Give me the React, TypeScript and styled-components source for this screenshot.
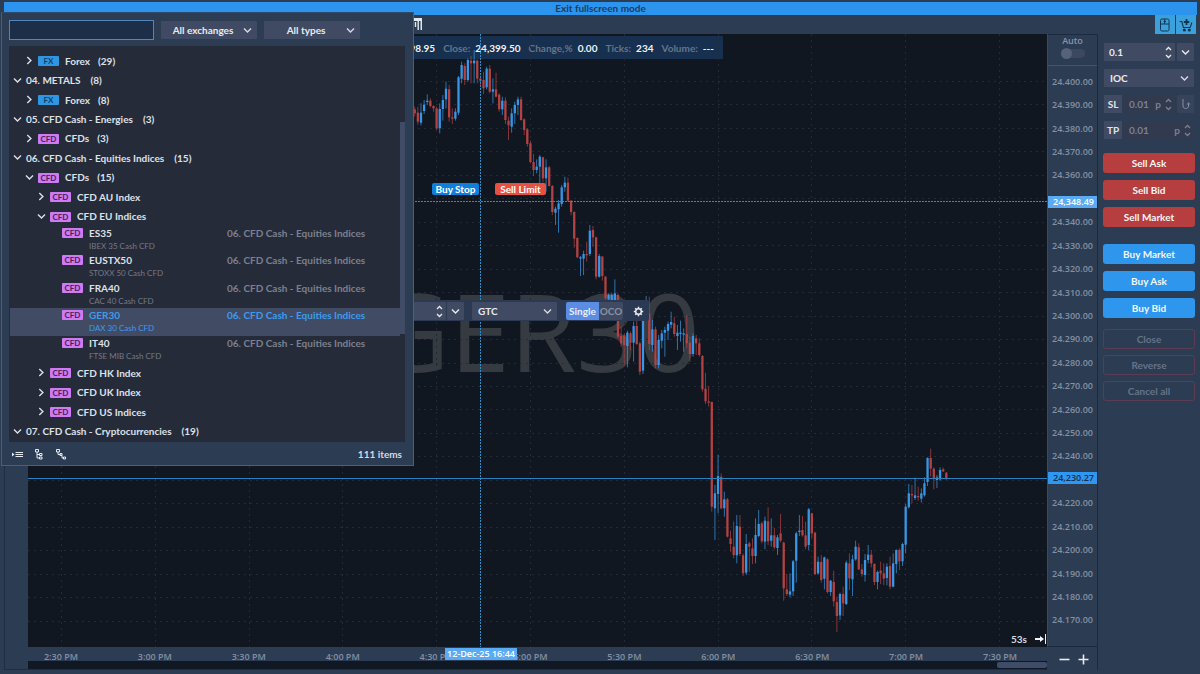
import React from "react";
import styled, { createGlobalStyle } from "styled-components";

const GlobalStyle = createGlobalStyle`
  * { box-sizing: border-box; }
  body { margin: 0; background: #2b3c53; }
  button, input, select { font: inherit; color: inherit; margin: 0; border: 0; border-radius: 0; padding: 0; }
  input:focus, select:focus { outline: none; }
`;

const Page = styled.div`
  position: relative;
  min-height: 100vh;
  display: flex;
  flex-direction: column;
  padding: 2px 0 4px 4px;
  background: #2b3c53;
  color: #d6dae2;
  font-family: Lato, "Open Sans", sans-serif;
  font-size: 10px;
  font-weight: 700;
  line-height: 12px;
  overflow: hidden;
`;

const Banner = styled.button`
  height: 13px;
  margin-right: 3px;
  background: #2c94ec;
  color: #1c3c5f;
  line-height: 13px;
  text-align: center;
`;

const ChartToolbar = styled.div`
  height: 19px;
  display: flex;
  align-items: stretch;
  justify-content: flex-end;
  gap: 1px;
  padding-right: 4px;
`;

const StyleButton = styled.button`
  width: 12px;
  margin-right: auto;
  margin-left: 408px;
  background: none;
`;

const ModeButton = styled.button`
  width: 20px;
  display: grid;
  place-items: center;
  background: #3ba1dc;
  color: #14344f;
`;

const Workspace = styled.main`
  flex: 1;
  display: grid;
  grid-template-columns: 24px minmax(0, 1fr) 51px 102px;
`;

const ToolStrip = styled.aside`
  border-left: 1px solid #1c2d45;
  border-bottom: 1px solid #1c2d45;
`;

const ChartColumn = styled.section`
  display: grid;
  grid-template-rows: minmax(0, 1fr) 14px 9px;
`;

const Plot = styled.div`
  position: relative;
  display: flex;
  align-items: center;
  justify-content: center;
  background: #101720;
  overflow: hidden;
`;

const Watermark = styled.div`
  padding: 0 4px 20px 0;
  font-family: "Open Sans", sans-serif;
  font-size: 108px;
  font-weight: 500;
  line-height: 120px;
  color: #363b42;
`;

const InfoBar = styled.dl`
  position: absolute;
  top: 2px;
  left: 0;
  width: 695px;
  height: 23px;
  margin: 0;
  padding-right: 9px;
  display: flex;
  align-items: center;
  justify-content: flex-end;
  gap: 8px;
  background: #18304f;
`;

const InfoItem = styled.div`
  display: flex;
  gap: 5px;
  dt { color: #64748a; }
  dd { margin: 0; color: #f0f3f7; }
`;

const ChartSvg = styled.svg`
  position: absolute;
  inset: 0;
  width: 100%;
  height: 100%;
`;

const OrderTag = styled.button<{ $left: number; $color: string; $width: number }>`
  position: absolute;
  top: 149px;
  left: ${(p) => p.$left}px;
  width: ${(p) => p.$width}px;
  height: 12px;
  border-radius: 2px;
  background: ${(p) => p.$color};
  color: #fff;
  line-height: 12px;
`;

const OrderToolbar = styled.div`
  position: absolute;
  top: 266px;
  left: 300px;
  width: 321px;
  height: 21px;
  padding: 2px 5px 1px 2px;
  display: flex;
  align-items: stretch;
  gap: 8px;
  border-radius: 2px;
  background: #2b3a52;
`;

const QtyGroup = styled.div`
  flex: 1;
  display: flex;
  gap: 1px;
`;

const Field = styled.div<{ $dim?: boolean }>`
  position: relative;
  flex: 1;
  min-width: 0;
  display: flex;
  align-items: center;
  justify-content: flex-end;
  gap: 4px;
  padding: 0 3px 0 5px;
  border-radius: 1px;
  background: ${(p) => (p.$dim ? "#313a4f" : "#404a63")};
  color: ${(p) => (p.$dim ? "#7a8292" : "#e8ebf0")};
`;

const FieldInput = styled.input`
  flex: 1;
  width: 0;
  min-width: 0;
  background: none;
  line-height: 14px;
`;

const SquareButton = styled.button<{ $dim?: boolean }>`
  width: 17px;
  display: grid;
  place-items: center;
  border-radius: 1px;
  background: ${(p) => (p.$dim ? "#37435a" : "#404a63")};
  color: ${(p) => (p.$dim ? "#8791a3" : "#e8ebf0")};
`;

const SelectBox = styled.div<{ $width?: number }>`
  position: relative;
  display: grid;
  width: ${(p) => (p.$width ? `${p.$width}px` : "auto")};
  svg {
    position: absolute;
    right: 5px;
    top: 50%;
    margin-top: -4px;
    pointer-events: none;
  }
`;

const Select = styled.select<{ $centered?: boolean }>`
  appearance: none;
  width: 100%;
  min-width: 0;
  padding: ${(p) => (p.$centered ? "0 12px 0 0" : "0 12px 0 6px")};
  text-align: ${(p) => (p.$centered ? "center" : "left")};
  text-align-last: ${(p) => (p.$centered ? "center" : "left")};
  border-radius: 1px;
  background: #404a63;
  color: #e8ebf0;
`;

const Segmented = styled.div`
  display: flex;
  margin: 0 2px 0 1px;
`;

const Segment = styled.button<{ $on?: boolean }>`
  width: ${(p) => (p.$on ? 33 : 24)}px;
  border-radius: ${(p) => (p.$on ? "2px 0 0 2px" : "0 2px 2px 0")};
  background: ${(p) => (p.$on ? "#5b8de4" : "#404a63")};
  color: ${(p) => (p.$on ? "#e6eefc" : "#8791a3")};
`;

const PlainButton = styled.button`
  display: grid;
  place-items: center;
  background: none;
  color: #e8ebf0;
`;

const Countdown = styled.div`
  position: absolute;
  right: 1px;
  bottom: 2px;
  display: flex;
  align-items: center;
  gap: 8px;
`;

const TimeAxis = styled.div`
  position: relative;
  margin-left: -14px;
  display: grid;
  grid-template-columns: repeat(11, minmax(0, 1fr));
  color: #8390a3;
  font-family: "Open Sans", sans-serif;
  font-size: 9px;
  font-weight: 600;
  line-height: 20px;
  text-align: center;
`;

const TimeTag = styled.div`
  position: absolute;
  top: 1px;
  left: 431px;
  width: 72px;
  height: 12px;
  background: #5aabf4;
  color: #fff;
  line-height: 12px;
`;

const ScrollTrack = styled.div`
  display: flex;
  justify-content: flex-end;
  padding: 1px 0;
  background: #101823;
  border-bottom: 1px solid #1c2d45;
`;

const ScrollThumb = styled.div`
  width: 50px;
  border-radius: 2px;
  background: #3e4c68;
`;

const PriceColumn = styled.section`
  display: grid;
  grid-template-rows: minmax(0, 1fr) 23px;
  border-right: 1px solid #1b2a40;
`;

const PriceAxis = styled.div`
  position: relative;
  display: flex;
  flex-direction: column;
  padding-bottom: 14px;
  border-left: 1px solid #3a4a60;
  border-bottom: 1px solid #1b2a40;
  font-family: "Open Sans", sans-serif;
  font-size: 9px;
  font-weight: 600;
`;

const AutoScale = styled.label`
  height: 32px;
  margin-bottom: 4px;
  display: flex;
  flex-direction: column;
  align-items: center;
  gap: 2px;
  border-top: 1px solid #1b2a40;
  border-bottom: 1px solid #43536a;
  color: #8a96a8;
`;

const Toggle = styled.input`
  appearance: none;
  width: 24px;
  height: 9px;
  margin: 0;
  border-radius: 5px;
  background: #3c4860;
  &::before {
    content: "";
    display: block;
    width: 11px;
    height: 11px;
    margin-top: -1px;
    border-radius: 50%;
    background: #56617a;
  }
`;

const PriceLabel = styled.div`
  flex: 1;
  display: flex;
  align-items: center;
  padding-left: 4px;
  color: #8390a3;
`;

const PriceTag = styled.div<{ $top: number; $last?: boolean }>`
  position: absolute;
  top: ${(p) => p.$top}px;
  left: 0;
  right: 0;
  height: 12px;
  padding-left: 5px;
  background: ${(p) => (p.$last ? "#3097f0" : "#5aabf4")};
  color: ${(p) => (p.$last ? "#14304e" : "#fff")};
  line-height: 12px;
`;

const ZoomControls = styled.div`
  display: flex;
  align-items: center;
  gap: 8px;
  padding: 2px 0 0 12px;
`;

const OrderPanel = styled.aside`
  padding: 9px 5px 0;
  display: flex;
  flex-direction: column;
`;

const OrderFields = styled.div`
  display: flex;
  flex-direction: column;
  gap: 8px;
  padding: 0 1px;
`;

const FieldRow = styled.div`
  height: 18px;
  display: flex;
  align-items: stretch;
  gap: 2px;
  & > ${SelectBox} { flex: 1; }
`;

const FieldLabel = styled.label`
  width: 18px;
  background: #404a63;
  color: #dfe3ea;
  line-height: 18px;
  text-align: center;
`;

const ButtonStack = styled.div<{ $top: number; $gap: number }>`
  margin-top: ${(p) => p.$top}px;
  display: flex;
  flex-direction: column;
  gap: ${(p) => p.$gap}px;
`;

const TradeButton = styled.button<{ $kind: "sell" | "buy" | "ghost" }>`
  height: 20px;
  border-radius: 3px;
  background: ${(p) => ({ sell: "#b63e3e", buy: "#2e96ec", ghost: "transparent" })[p.$kind]};
  border: ${(p) => (p.$kind === "ghost" ? "1px solid #5b3c54" : "0")};
  color: ${(p) => (p.$kind === "ghost" ? "#66748a" : "#f4f6fa")};
`;

const SymbolPopup = styled.section`
  position: absolute;
  top: 12px;
  left: 1px;
  width: 413px;
  height: 454px;
  padding: 7px 8px 0 7px;
  display: flex;
  flex-direction: column;
  background: #2b3c53;
  border: 1px solid #4a5f7c;
  border-top-color: #2f4a6b;
`;

const FilterRow = styled.div`
  height: 20px;
  margin-bottom: 6px;
  display: flex;
  align-items: center;
  gap: 7px;
  & > ${SelectBox} { height: 18px; }
`;

const SearchInput = styled.input`
  width: 145px;
  height: 20px;
  padding: 0 4px;
  background: #1d2e49;
  border: 1px solid #5285c0;
`;

const TreeFrame = styled.div`
  height: 396px;
  display: flex;
  background: #262b3a;
`;

const Tree = styled.ul`
  flex: 1;
  min-width: 0;
  margin: 0;
  padding: 5px 0 1px 1px;
  display: flex;
  flex-direction: column;
  list-style: none;
`;

const TreeThumb = styled.div`
  width: 5px;
  height: 212px;
  margin-top: 76px;
  background: #404b65;
`;

const TreeItem = styled.li<{ $leaf?: boolean }>`
  flex: 1 0 ${(p) => (p.$leaf ? 27 : 19)}px;
  display: flex;
`;

const TreeRow = styled.button<{ $level: number; $leaf?: boolean; $selected?: boolean }>`
  flex: 1;
  min-width: 0;
  display: flex;
  align-items: ${(p) => (p.$leaf ? "flex-start" : "center")};
  padding-top: ${(p) => (p.$leaf ? 1 : 0)}px;
  padding-left: ${(p) => 2 + p.$level * 12 + (p.$leaf ? 14 : 0)}px;
  background: ${(p) => (p.$selected ? "#414b64" : "none")};
  color: ${(p) => (p.$selected ? "#3d9cec" : "#dde1e8")};
  text-align: left;
  white-space: nowrap;
`;

const ChevronSlot = styled.span`
  width: 11px;
  margin-right: 3px;
  display: grid;
  place-items: center;
`;

const Badge = styled.span<{ $fx?: boolean }>`
  width: 21px;
  height: 10px;
  margin-top: 1px;
  margin-right: 6px;
  border-radius: 1px;
  background: ${(p) => (p.$fx ? "#2f97e2" : "#cf7af2")};
  color: ${(p) => (p.$fx ? "#12406a" : "#45205a")};
  font-size: 8px;
  line-height: 10px;
  text-align: center;
`;

const Count = styled.span<{ $root: boolean }>`
  margin-left: ${(p) => (p.$root ? 10 : 8)}px;
`;

const LeafName = styled.span`
  width: 138px;
  display: flex;
  flex-direction: column;
  gap: 1px;
`;

const Description = styled.span<{ $selected?: boolean }>`
  color: ${(p) => (p.$selected ? "#3d9cec" : "#747a87")};
  font-size: 8px;
  font-weight: 400;
`;

const Exchange = styled.span<{ $selected?: boolean }>`
  color: ${(p) => (p.$selected ? "#3d9cec" : "#7b818e")};
`;

const PopupFooter = styled.footer`
  flex: 1;
  display: flex;
  align-items: center;
  gap: 10px;
  padding: 0 3px 0 2px;
  & > span { margin-left: auto; }
`;

const Chevron = ({ dir = "down" }: { dir?: "down" | "right" }) => (
  <svg width="9" height="9" viewBox="0 0 9 9" fill="none" stroke="currentColor" strokeWidth="1.4" aria-hidden="true">
    <path d={dir === "down" ? "M1 2.5 4.5 6 8 2.5" : "M2.3 1 5.9 4.5 2.3 8"} />
  </svg>
);

const Stepper = () => (
  <svg width="7" height="13" viewBox="0 0 7 13" fill="none" stroke="currentColor" strokeWidth="1.3" aria-hidden="true">
    <path d="M1 4 3.5 1.5 6 4M1 9 3.5 11.5 6 9" />
  </svg>
);

type Row = { level: number; label: string; count?: number; badge?: "FX" | "CFD"; open?: boolean; desc?: string; selected?: boolean };

const ROWS: Row[] = [
  { level: 1, label: "Forex", count: 29, badge: "FX" },
  { level: 0, label: "04. METALS", count: 8, open: true },
  { level: 1, label: "Forex", count: 8, badge: "FX" },
  { level: 0, label: "05. CFD Cash - Energies", count: 3, open: true },
  { level: 1, label: "CFDs", count: 3, badge: "CFD" },
  { level: 0, label: "06. CFD Cash - Equities Indices", count: 15, open: true },
  { level: 1, label: "CFDs", count: 15, badge: "CFD", open: true },
  { level: 2, label: "CFD AU Index", badge: "CFD" },
  { level: 2, label: "CFD EU Indices", badge: "CFD", open: true },
  { level: 3, label: "ES35", badge: "CFD", desc: "IBEX 35 Cash CFD" },
  { level: 3, label: "EUSTX50", badge: "CFD", desc: "STOXX 50 Cash CFD" },
  { level: 3, label: "FRA40", badge: "CFD", desc: "CAC 40 Cash CFD" },
  { level: 3, label: "GER30", badge: "CFD", desc: "DAX 30 Cash CFD", selected: true },
  { level: 3, label: "IT40", badge: "CFD", desc: "FTSE MIB Cash CFD" },
  { level: 2, label: "CFD HK Index", badge: "CFD" },
  { level: 2, label: "CFD UK Index", badge: "CFD" },
  { level: 2, label: "CFD US Indices", badge: "CFD" },
  { level: 0, label: "07. CFD Cash - Cryptocurrencies", count: 19, open: true },
];

const TIMES = ["2:30 PM", "3:00 PM", "3:30 PM", "4:00 PM", "4:30 PM", "5:00 PM", "5:30 PM", "6:00 PM", "6:30 PM", "7:00 PM", "7:30 PM"];
const LEVELS = Array.from({ length: 24 }, (_, i) => 400 - i * 10);
/* Levels whose label gives way to a price tag. */
const TAGGED = [350, 230];

/* One-minute bars: high, body top, body bottom, low, in thirds of a pixel below each run's base; u = up, d = down. */
const RUNS: { from: number; base: number; bars: string }[] = [
  {
    from: -97,
    base: -102,
    bars:
      "320 328 340 350 d|320 338 365 374 d|310 338 368 376 u|300 314 333 342 u|283 302 306 315 u|295 302 318 322 d|316 318 325 335 d|322 325 385 390 d|310 327 385 400 u|285 300 327 362 u|245 266 298 325 u|255 268 352 365 d|325 352 356 372 d|325 335 356 362 u|228 232 338 345 u|185 195 236 250 u|190 198 240 255 d|175 180 240 245 u|168 182 190 250 d|150 182 190 250 u|178 182 236 250 d|232 236 242 260 d|215 240 265 282 d|200 206 262 268 u|195 206 275 280 d|235 268 275 310 u|218 268 290 292 d|280 284 328 335 d|290 302 328 345 u|292 302 360 372 d|350 362 376 420 d|325 340 380 398 u|305 315 340 372 u|290 298 315 345 u|290 298 360 362 d|355 358 390 405 d|385 388 432 440 d|422 430 486 490 d|462 486 510 528 d|478 500 510 520 u|465 470 500 550 u|470 472 535 548 d|478 502 535 575 u|498 502 558 560 d|555 558 636 645 d|620 626 638 675 u|600 610 628 698 u|555 562 612 620 u|530 548 562 575 u|533 548 602 605 d",
  },
  {
    from: -47,
    base: 438,
    bars:
      "60 62 96 106 d|94 96 176 203 d|172 174 232 234 d|228 232 236 288 u|212 222 236 285 u|185 222 226 245 d|135 152 222 228 u|138 150 172 200 d|170 172 290 298 d|222 228 290 293 u|228 230 288 302 d|288 290 355 360 d|340 345 358 370 u|340 345 360 370 u|298 340 362 370 u|340 345 470 475 d|440 468 490 500 d|460 466 495 557 d|452 458 498 562 u|455 460 488 510 d|425 438 488 545 u|420 438 492 495 d|485 490 575 585 d|360 420 572 582 u|348 370 400 410 u|350 400 492 510 d|420 448 495 515 u|440 448 555 565 d|465 480 555 565 u|450 460 482 505 u|440 450 458 530 u|425 432 452 480 u|395 426 434 445 u|410 430 462 470 d|435 458 468 510 u|422 458 462 485 u|445 460 464 515 u|405 462 490 505 d|470 488 522 545 d|460 468 522 530 u|465 475 490 525 d|475 490 525 530 d",
  },
  {
    from: -5,
    base: 798,
    bars:
      "165 168 268 275 d|218 266 304 312 d|258 304 308 320 d|305 306 620 635 d|555 580 625 720 u|465 528 582 640 u|520 530 625 628 d|575 598 625 650 u|594 598 710 712 d|692 715 732 755 d|665 740 765 775 d|645 678 766 790 u|645 680 762 768 d|760 766 820 828 d|702 732 818 825 u|725 730 740 815 d|715 745 768 792 d|655 705 768 790 u|630 672 708 712 u|665 670 724 730 d|650 662 725 748 u|622 664 724 735 d|655 706 722 740 u|684 706 742 748 d|705 712 744 765 u|642 700 722 728 d",
  },
  {
    from: 21,
    base: 1188,
    bars:
      "335 338 475 512 d|432 478 492 498 d|430 484 494 502 u|390 394 484 498 u|305 310 392 458 u|255 302 306 318 u|258 300 316 320 d|275 316 350 358 d|234 238 345 360 u|248 250 310 325 d|305 308 432 435 d|380 395 430 435 u|375 396 450 458 d|380 382 446 478 u|385 388 486 490 d|450 452 486 498 u|422 456 514 530 d|500 516 558 606 d|488 492 556 570 u|470 492 520 558 d|392 398 522 525 u|370 400 445 480 d|375 388 448 498 u|332 350 388 392 u|340 352 418 420 d|402 418 432 440 d|372 390 435 455 u|345 374 390 400 u|360 374 400 412 d|400 402 456 465 d|422 426 456 478 u|395 422 430 462 d|400 430 446 465 d|400 410 444 466 u|380 408 470 478 d|370 400 470 472 u|358 360 402 430 u|355 360 394 420 d|338 342 394 408 u|222 230 344 370 u|162 190 232 235 u|165 192 196 220 d|143 196 204 210 u|170 198 202 212 d|175 190 206 218 u|142 160 196 200 u|82 84 156 168 u|56 84 116 140 d|112 116 146 178 d|135 142 150 174 u|112 120 148 152 u|113 118 124 126 d|126 128 144 150 d",
  },
];

const CANDLES = RUNS.flatMap((run) =>
  run.bars.split("|").map((bar, i) => {
    const [high, top, bottom, low, side] = bar.split(" ");
    const y = (v: string) => (Number(v) + run.base) / 3;
    return { x: 690 + (run.from + i) * 3.127, high: y(high), top: y(top), bottom: y(bottom), low: y(low), up: side === "u" };
  }),
);

const Chart = () => (
  <ChartSvg role="img" aria-label="GER30 one-minute chart">
    <g stroke="#222b37" strokeDasharray="2 4">
      {LEVELS.map((p, i) => (
        <line key={p} x1="0" x2="100%" y1={47.5 + Math.round(i * 23.46)} y2={47.5 + Math.round(i * 23.46)} />
      ))}
      {TIMES.map((t, i) => (
        <line key={t} y1="0" y2="100%" x1={33.5 + Math.round(i * 93.8)} x2={33.5 + Math.round(i * 93.8)} />
      ))}
    </g>
    {CANDLES.map((c) => (
      <g key={c.x} fill={c.up ? "#3896e6" : "#b34242"}>
        <rect x={c.x - 0.4} y={c.high} width="0.9" height={c.low - c.high} opacity="0.8" />
        <rect x={c.x - 1.1} y={c.top} width="2.3" height={Math.max(1, c.bottom - c.top)} />
      </g>
    ))}
    <line x1="0" x2="100%" y1="444.5" y2="444.5" stroke="#2e7fbd" />
    <g stroke="#2f8cc4" strokeDasharray="2 1">
      <line x1="0" x2="100%" y1="167.5" y2="167.5" />
      <line x1="452.5" x2="452.5" y1="0" y2="100%" />
    </g>
  </ChartSvg>
);

export default function App() {
  return (
    <Page>
      <GlobalStyle />
      <Banner type="button">Exit fullscreen mode</Banner>
      <ChartToolbar>
        <StyleButton type="button" aria-label="Chart style">
          <svg width="10" height="14" viewBox="0 0 10 14" aria-hidden="true">
            <path d="M0 1H9V13H7.5V4H0Z" fill="#e4e8ee" />
            <path d="M2.5 5v5M5.2 4v9" stroke="#e4e8ee" strokeWidth="1.4" />
          </svg>
        </StyleButton>
        <ModeButton type="button" aria-label="Mouse trading">
          <svg width="12" height="14" viewBox="0 0 12 14" fill="none" stroke="currentColor" aria-hidden="true">
            <rect x="1.5" y="1" width="8.5" height="12" rx="1.5" />
            <path d="M1.5 6H10M5.7 1V6M4.5 3.5H7" />
          </svg>
        </ModeButton>
        <ModeButton type="button" aria-label="Order entry">
          <svg width="14" height="14" viewBox="0 0 14 14" fill="none" stroke="currentColor" strokeWidth="1.1" aria-hidden="true">
            <path d="M.5 3.5H2.8L4.4 9.5H11.2L12.8 4.5" />
            <path d="M7.5 1V7M4.8 4H10.3" strokeWidth="1.8" />
            <circle cx="5.3" cy="12" r="1" fill="currentColor" />
            <circle cx="10.3" cy="12" r="1" fill="currentColor" />
          </svg>
        </ModeButton>
      </ChartToolbar>

      <Workspace>
        <ToolStrip />
        <ChartColumn>
          <Plot>
            <Watermark>GER30</Watermark>
            <InfoBar>
              <InfoItem><dd>24,398.95</dd></InfoItem>
              <InfoItem><dt>Close:</dt><dd>24,399.50</dd></InfoItem>
              <InfoItem><dt>Change,%</dt><dd>0.00</dd></InfoItem>
              <InfoItem><dt>Ticks:</dt><dd>234</dd></InfoItem>
              <InfoItem><dt>Volume:</dt><dd>---</dd></InfoItem>
            </InfoBar>
            <Chart />
            <OrderTag type="button" $left={404} $width={47} $color="#0f7fdc">Buy Stop</OrderTag>
            <OrderTag type="button" $left={467} $width={51} $color="#e8503f">Sell Limit</OrderTag>
            <OrderToolbar>
              <QtyGroup>
                <Field>
                  <FieldInput aria-label="Quantity" />
                  <Stepper />
                </Field>
                <SquareButton type="button" aria-label="Quantity presets"><Chevron /></SquareButton>
              </QtyGroup>
              <SelectBox $width={85}>
                <Select aria-label="Time in force" defaultValue="GTC"><option>GTC</option></Select>
                <Chevron />
              </SelectBox>
              <Segmented>
                <Segment type="button" $on>Single</Segment>
                <Segment type="button">OCO</Segment>
              </Segmented>
              <PlainButton type="button" aria-label="Settings">
                <svg width="11" height="11" viewBox="0 0 11 11" fill="none" stroke="currentColor" aria-hidden="true">
                  <circle cx="5.5" cy="5.5" r="2.8" strokeWidth="1.5" />
                  <path d="M5.5 .8V2.4M5.5 8.6V10.2M.8 5.5H2.4M8.6 5.5H10.2M2.2 2.2 3.3 3.3M7.7 7.7 8.8 8.8M2.2 8.8 3.3 7.7M7.7 3.3 8.8 2.2" strokeWidth="1.5" />
                </svg>
              </PlainButton>
            </OrderToolbar>
            <Countdown>
              53s
              <svg width="11" height="10" viewBox="0 0 11 10" aria-hidden="true">
                <path d="M0 4H5V2L9 5 5 8V6H0ZM10 0H11V10H10Z" fill="#f2f4f7" />
              </svg>
            </Countdown>
          </Plot>
          <TimeAxis>
            {TIMES.map((t) => <span key={t}>{t}</span>)}
            <TimeTag>12-Dec-25 16:44</TimeTag>
          </TimeAxis>
          <ScrollTrack><ScrollThumb /></ScrollTrack>
        </ChartColumn>

        <PriceColumn>
          <PriceAxis>
            <AutoScale>
              Auto
              <Toggle type="checkbox" />
            </AutoScale>
            {LEVELS.map((p) => <PriceLabel key={p}>{TAGGED.includes(p) ? null : `24.${p}.00`}</PriceLabel>)}
            <PriceTag $top={162}>24,348.49</PriceTag>
            <PriceTag $top={438} $last>24,230.27</PriceTag>
          </PriceAxis>
          <ZoomControls>
            <PlainButton type="button" aria-label="Zoom out">
              <svg width="11" height="11" viewBox="0 0 11 11" stroke="currentColor" strokeWidth="1.6" aria-hidden="true"><path d="M.5 5.5H10.5" /></svg>
            </PlainButton>
            <PlainButton type="button" aria-label="Zoom in">
              <svg width="11" height="11" viewBox="0 0 11 11" stroke="currentColor" strokeWidth="1.6" aria-hidden="true"><path d="M.5 5.5H10.5M5.5 .5V10.5" /></svg>
            </PlainButton>
          </ZoomControls>
        </PriceColumn>

        <OrderPanel>
          <OrderFields>
            <FieldRow>
              <Field>
                <FieldInput aria-label="Order quantity" defaultValue="0.1" />
                <Stepper />
              </Field>
              <SquareButton type="button" aria-label="Order quantity presets"><Chevron /></SquareButton>
            </FieldRow>
            <FieldRow>
              <SelectBox>
                <Select aria-label="Order validity" defaultValue="IOC"><option>IOC</option></Select>
                <Chevron />
              </SelectBox>
            </FieldRow>
            <FieldRow>
              <FieldLabel htmlFor="stop-loss">SL</FieldLabel>
              <Field $dim>
                <FieldInput id="stop-loss" defaultValue="0.01" />
                p
                <Stepper />
              </Field>
              <SquareButton type="button" $dim aria-label="Trailing stop">
                <svg width="10" height="12" viewBox="0 0 10 12" fill="none" stroke="currentColor" aria-hidden="true">
                  <path d="M2 1V8C2 11.3 7.5 11.3 7.5 8V5.5M5.8 6.5 7.5 5 9.2 6.5" />
                </svg>
              </SquareButton>
            </FieldRow>
            <FieldRow>
              <FieldLabel htmlFor="take-profit">TP</FieldLabel>
              <Field $dim>
                <FieldInput id="take-profit" defaultValue="0.01" />
                p
                <Stepper />
              </Field>
            </FieldRow>
          </OrderFields>
          <ButtonStack $top={14} $gap={7}>
            <TradeButton type="button" $kind="sell">Sell Ask</TradeButton>
            <TradeButton type="button" $kind="sell">Sell Bid</TradeButton>
            <TradeButton type="button" $kind="sell">Sell Market</TradeButton>
          </ButtonStack>
          <ButtonStack $top={17} $gap={7}>
            <TradeButton type="button" $kind="buy">Buy Market</TradeButton>
            <TradeButton type="button" $kind="buy">Buy Ask</TradeButton>
            <TradeButton type="button" $kind="buy">Buy Bid</TradeButton>
          </ButtonStack>
          <ButtonStack $top={11} $gap={6}>
            <TradeButton type="button" $kind="ghost">Close</TradeButton>
            <TradeButton type="button" $kind="ghost">Reverse</TradeButton>
            <TradeButton type="button" $kind="ghost">Cancel all</TradeButton>
          </ButtonStack>
        </OrderPanel>
      </Workspace>

      <SymbolPopup>
        <FilterRow>
          <SearchInput aria-label="Search symbols" />
          <SelectBox $width={96}>
            <Select $centered aria-label="Exchange" defaultValue="All exchanges"><option>All exchanges</option></Select>
            <Chevron />
          </SelectBox>
          <SelectBox $width={96}>
            <Select $centered aria-label="Type" defaultValue="All types"><option>All types</option></Select>
            <Chevron />
          </SelectBox>
        </FilterRow>
        <TreeFrame>
          <Tree>
            {ROWS.map((r, i) => (
              <TreeItem key={i} $leaf={!!r.desc}>
                <TreeRow type="button" $level={r.level} $leaf={!!r.desc} $selected={r.selected}>
                  {!r.desc && <ChevronSlot><Chevron dir={r.open ? "down" : "right"} /></ChevronSlot>}
                  {r.badge && <Badge $fx={r.badge === "FX"}>{r.badge}</Badge>}
                  {r.desc ? (
                    <>
                      <LeafName>
                        {r.label}
                        <Description $selected={r.selected}>{r.desc}</Description>
                      </LeafName>
                      <Exchange $selected={r.selected}>06. CFD Cash - Equities Indices</Exchange>
                    </>
                  ) : (
                    <>
                      {r.label}
                      {r.count !== undefined && <Count $root={r.level === 0}>({r.count})</Count>}
                    </>
                  )}
                </TreeRow>
              </TreeItem>
            ))}
          </Tree>
          <TreeThumb />
        </TreeFrame>
        <PopupFooter>
          <PlainButton type="button" aria-label="Show list">
            <svg width="12" height="12" viewBox="0 0 12 12" fill="none" stroke="currentColor" aria-hidden="true">
              <path d="M4.5 4.5H12M4.5 6.5H12M4.5 8.5H12" />
              <path d="M1 4.5 3.5 6.5 1 8.5Z" fill="currentColor" stroke="none" />
            </svg>
          </PlainButton>
          <PlainButton type="button" aria-label="Expand all">
            <svg width="12" height="12" viewBox="0 0 12 12" fill="none" stroke="currentColor" aria-hidden="true">
              <path d="M2.5 1.5H5.5V4H2.5ZM4 4V10H6.5M4 6.5H6.5M6.5 5.5H9V7.5H6.5ZM6.5 9H9V11H6.5Z" />
            </svg>
          </PlainButton>
          <PlainButton type="button" aria-label="Collapse all">
            <svg width="12" height="12" viewBox="0 0 12 12" fill="none" stroke="currentColor" aria-hidden="true">
              <path d="M1.5 1.5H4.5V4H1.5ZM3 4V6.5H5.5M5 5.5H7V7.5H5ZM7 7.5V10H8.5M8.5 9H10.5V11H8.5Z" />
            </svg>
          </PlainButton>
          <span>111 items</span>
        </PopupFooter>
      </SymbolPopup>
    </Page>
  );
}
